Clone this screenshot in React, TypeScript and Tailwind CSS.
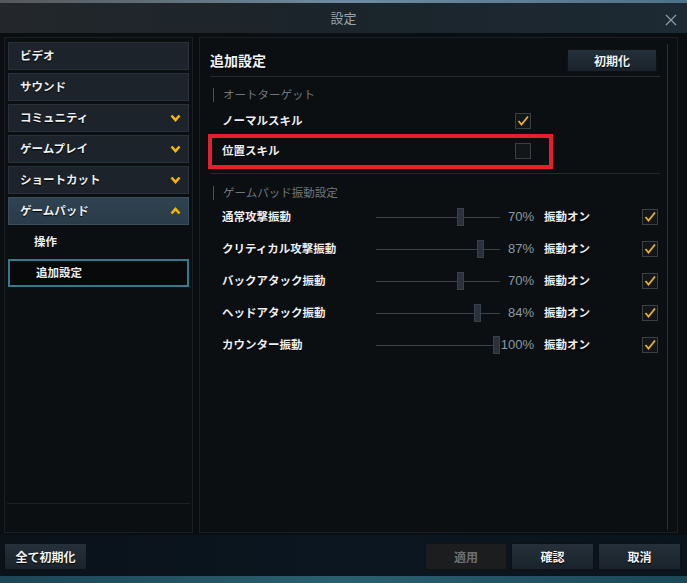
import type { ReactNode } from 'react';

const jp = "font-['Noto_Sans_CJK_JP','Noto_Sans',sans-serif]";

function Chevron({ up = false }: { up?: boolean }) {
  return (
    <svg width="11" height="8" viewBox="0 0 11 8" className="shrink-0">
      <polyline
        points={up ? '1.5,6.5 5.5,2 9.5,6.5' : '1.5,1.5 5.5,6 9.5,1.5'}
        fill="none"
        stroke="#f2b705"
        strokeWidth="2.6"
        strokeLinejoin="miter"
      />
    </svg>
  );
}

function Check({ on }: { on: boolean }) {
  return (
    <div className="w-[16px] h-[16px] shrink-0 border border-[#3a4046] bg-[#121619] flex items-center justify-center">
      {on && (
        <svg width="14" height="14" viewBox="0 0 14 14">
          <polyline points="2.5,7 5.5,10.5 12,2.5" fill="none" stroke="#e9b324" strokeWidth="1.8" />
        </svg>
      )}
    </div>
  );
}

function MenuItem({ label, chevron, open }: { label: string; chevron?: boolean; open?: boolean }) {
  return (
    <div
      className={
        'h-[28px] flex items-center justify-between pl-[11px] pr-[7px] border ' +
        (open
          ? 'bg-gradient-to-b from-[#2f4352] to-[#2a3b48] border-[#3a4d5b]'
          : 'bg-[#1c232a] border-[#29313a]')
      }
    >
      <span className="text-[11.5px] font-bold text-[#eef0f2] [text-shadow:0_1px_1px_#000]">{label}</span>
      {chevron && <Chevron up={open} />}
    </div>
  );
}

function SectionTitle({ children }: { children: ReactNode }) {
  return (
    <div className="flex items-center h-[16px] pl-[3px]">
      <div className="w-px h-[14px] bg-[#4a5157]" />
      <span className="ml-[9px] text-[11.5px] text-[#6f767c]">{children}</span>
    </div>
  );
}

function Button({ label, w, h = 'h-[27px]', disabled }: { label: string; w: string; h?: string; disabled?: boolean }) {
  return (
    <div
      className={
        w +
        ' ' +
        h +
        ' flex items-center justify-center border text-[12px] font-bold ' +
        (disabled
          ? 'bg-[#1c1d1e] border-[#111213] text-[#6d7073]'
          : 'bg-gradient-to-b from-[#24303a] to-[#1a232b] border-[#0d1115] text-[#f0f2f4] [text-shadow:0_1px_1px_#000]')
      }
    >
      {label}
    </div>
  );
}

const vibration = [
  { label: '通常攻撃振動', pct: 70 },
  { label: 'クリティカル攻撃振動', pct: 87 },
  { label: 'バックアタック振動', pct: 70 },
  { label: 'ヘッドアタック振動', pct: 84 },
  { label: 'カウンター振動', pct: 100 },
];

const label = 'text-[11.5px] font-bold text-[#eceef0] [text-shadow:0_1px_1px_#000]';

export default function App() {
  return (
    <div className={'w-[687px] h-[583px] flex flex-col overflow-hidden bg-[#0a1119] ' + jp}>
      <div className="h-[3px] bg-gradient-to-r from-[#55585a] via-[#6f8ba0] to-[#4e7288]" />

      {/* Title */}
      <div className="h-[30px] relative flex items-center justify-center bg-gradient-to-r from-[#23272b] via-[#1b242b] to-[#1d2a33]">
        <span className="text-[13px] text-[#9aa3a9]">設定</span>
        <svg width="12" height="12" viewBox="0 0 12 12" className="absolute right-[10px] top-[11px]">
          <path d="M1 1 L11 11 M11 1 L1 11" stroke="#8c969d" strokeWidth="1.4" />
        </svg>
      </div>

      {/* Body */}
      <div className="h-[502px] flex gap-[6px] pl-[4px] pr-[9px] pt-[4px] pb-[2px] bg-[#0b0e11]">
        {/* Left menu */}
        <aside className="w-[189px] flex flex-col border border-[#1b2025] bg-[#0c0f12]">
          <div className="flex flex-col gap-[3px] pt-[4px] px-[3px]">
            <MenuItem label="ビデオ" />
            <MenuItem label="サウンド" />
            <MenuItem label="コミュニティ" chevron />
            <MenuItem label="ゲームプレイ" chevron />
            <MenuItem label="ショートカット" chevron />
            <MenuItem label="ゲームパッド" chevron open />
            <div className="h-[28px] flex items-center pl-[26px]">
              <span className={label}>操作</span>
            </div>
            <div className="h-[28px] flex items-center pl-[26px] border-2 border-[#347a8f] bg-[#07090b]">
              <span className={label}>追加設定</span>
            </div>
          </div>
          <div className="mt-auto mx-[2px] h-[29px] border-t border-[#1c2126]" />
        </aside>

        {/* Right panel */}
        <section className="flex-1 flex border border-[#1b2025] bg-[#0c0f12]">
          <div className="flex-1 flex flex-col pl-[10px] pr-[7px]">
            <div className="flex items-center justify-between pt-[11px] pb-[4px] border-b border-[#262c31]">
              <span className="text-[14px] font-bold text-[#f0f2f4] [text-shadow:0_1px_1px_#000]">追加設定</span>
              <div className="mr-[3px]">
                <Button label="初期化" w="w-[90px]" h="h-[23px]" />
              </div>
            </div>

            <div className="mt-[10px]">
              <SectionTitle>オートターゲット</SectionTitle>
            </div>
            <div className="mt-[3px] flex flex-col">
              <div className="h-[30px] flex items-center pl-[12px]">
                <span className={'w-[293px] ' + label}>ノーマルスキル</span>
                <Check on />
              </div>
              <div className="relative h-[30px] flex items-center pl-[12px]">
                <span className={'w-[293px] ' + label}>位置スキル</span>
                <Check on={false} />
                <div className="absolute -left-[2px] -top-[2px] w-[345px] h-[35px] border-[4px] border-[#e3202b]" />
              </div>
            </div>
            <div className="mt-[7px] h-px bg-[#22282d]" />

            <div className="mt-[11px]">
              <SectionTitle>ゲームパッド振動設定</SectionTitle>
            </div>
            <div className="flex flex-col">
              {vibration.map(v => (
                <div key={v.label} className="h-[32px] flex items-center pl-[12px]">
                  <span className={'w-[154px] ' + label}>{v.label}</span>
                  <div className="relative w-[124px] h-[18px] flex items-center">
                    <div className="w-full h-px bg-[#3a4248]" />
                    <div
                      className="absolute top-0 w-[7px] h-[18px] bg-[#29323a] border border-[#36414a]"
                      style={{ left: Math.round(v.pct * 1.2) - 3 }}
                    />
                  </div>
                  <span className="w-[34px] text-right text-[13px] font-['Liberation_Sans',sans-serif] text-[#8799a5]">
                    {v.pct}%
                  </span>
                  <span className={'ml-[10px] w-[98px] ' + label}>振動オン</span>
                  <Check on />
                </div>
              ))}
            </div>
          </div>
          <div className="w-px mt-[6px] mb-[2px] bg-[#2a3035]" />
          <div className="w-[9px]" />
        </section>
      </div>

      {/* Footer */}
      <div className="h-[41px] flex items-start pt-[8px] pl-[4px] pr-[6px] bg-gradient-to-r from-[#0a121a] via-[#0b1620] to-[#0a141d]">
        <Button label="全て初期化" w="w-[83px]" />
        <div className="flex-1" />
        <div className="flex gap-[4px]">
          <Button label="適用" w="w-[82px]" disabled />
          <Button label="確認" w="w-[83px]" />
          <Button label="取消" w="w-[83px]" />
        </div>
      </div>
      <div className="h-[7px] bg-gradient-to-r from-[#1d4656] via-[#2a5f72] to-[#1c4858]" />
    </div>
  );
}
